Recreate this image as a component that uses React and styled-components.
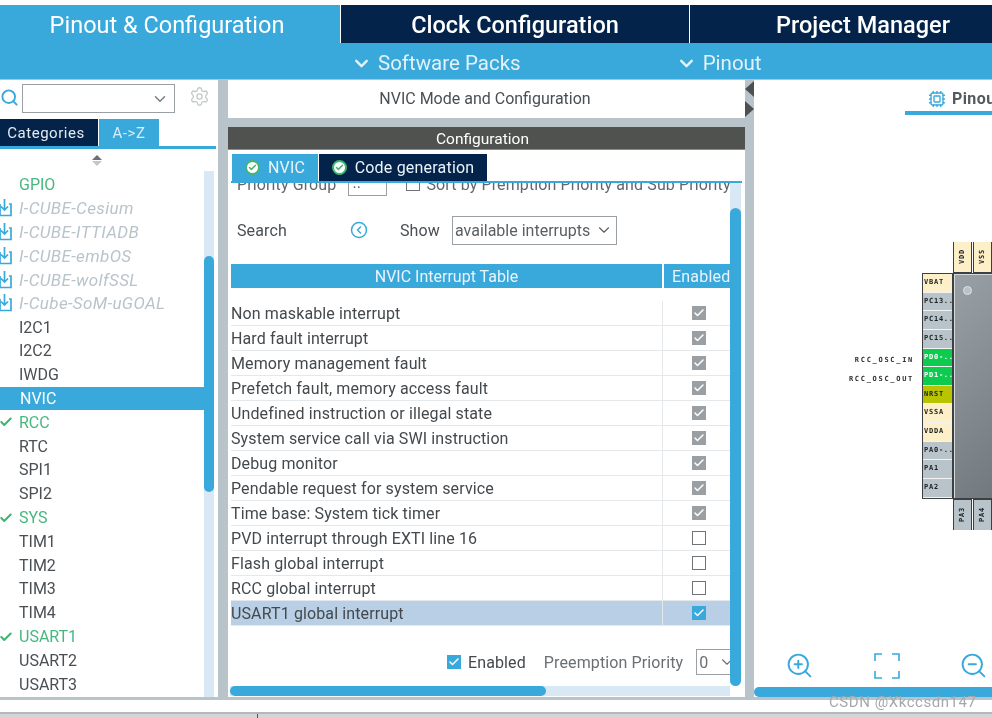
import React from "react";
import styled, { createGlobalStyle } from "styled-components";
import { ChevronDown, Search, Settings, Check, CircleChevronLeft, ZoomIn, ZoomOut, Cpu } from "lucide-react";

const BLUE = "#39a9dc";
const NAVY = "#03234b";
const GRAY = "#b9c4ca";

const Global = createGlobalStyle`
  html, body { margin: 0; padding: 0; background: #fff; }
  * { box-sizing: border-box; }
  body { font-family: Roboto, "Liberation Sans", sans-serif; color: #4a4f54; }
`;

const Page = styled.div`
  width: 992px; height: 718px; overflow: hidden; position: relative;
  display: flex; flex-direction: column; padding-top: 5px; background: #fff; filter: blur(0.3px);
`;
const TopBar = styled.div`
  height: 38px; display: grid; grid-template-columns: 340px 1px 348px 1px 1fr; background: ${BLUE};
`;
const TopTab = styled.div`
  display: flex; align-items: center; justify-content: center; font-size: 23.5px;
  padding-top: 2px; color: #fff;
  padding-left: ${p => p.$pl || 0}px;
  padding-right: ${p => p.$pr || 0}px;
  font-weight: ${p => (p.$active ? 400 : 500)};
  background: ${p => (p.$active ? BLUE : NAVY)};
`;
const TabSep = styled.div` background: #fff; `;
const SubBar = styled.div`
  height: 37px; background: ${BLUE}; display: flex; color: #e3f1f9; font-size: 20.5px; align-items: center;
  padding: 4px 0 0 351px; gap: 155px; border-bottom: 1px solid #8ed0ee;
`;
const SubItem = styled.div`
  display: flex; align-items: center; gap: 6px; svg { display: block; }
`;
const Main = styled.div`
  flex: none; height: 620px; display: flex; background: ${GRAY}; padding-bottom: 3px;
`;

/* left */
const LeftPanel = styled.div`
  width: 218px; background: #fff; display: flex; flex-direction: column; flex: none;
`;
const SearchRow = styled.div`
  height: 39px; display: flex; align-items: flex-start; padding: 4px 0 0 0; color: ${BLUE};
`;
const SearchBox = styled.div`
  width: 153px; height: 29px; margin-left: 3px; border: 1.5px solid #9aa0a4;
  display: flex; align-items: center; justify-content: flex-end; padding-right: 5px; color: #7a7f83;
`;
const Gear = styled.div` margin: 2px 0 0 14px; color: #c4c8ca; `;
const SideTabs = styled.div`
  height: 30px; display: flex; border-bottom: 3px solid ${BLUE}; margin-right: 2px;
`;
const SideTab = styled.div`
  height: 27px; display: flex; align-items: center; justify-content: center; font-size: 15px; letter-spacing: .55px;
  width: ${p => p.$w}px; margin-right: 1px; color: ${p => (p.$active ? "#d8eef9" : "#e6ebef")};
  padding-right: ${p => (p.$active ? 0 : 6)}px;
  background: ${p => (p.$active ? BLUE : NAVY)};
`;
const SortMark = styled.div`
  height: 22px; display: flex; flex-direction: column; align-items: center; justify-content: center;
  gap: 1px; padding-right: 24px; flex: none;
`;
const Tri = styled.div`
  width: 0; height: 0; border-left: 5px solid transparent; border-right: 5px solid transparent;
  ${p => (p.$up ? "border-bottom: 5px solid #6c7074;" : "border-top: 5px solid #c3c7ca;")}
`;
const ListWrap = styled.div`
  flex: 1; min-height: 0; display: flex; overflow: hidden;
`;
const List = styled.div`
  width: 204px; flex: none; padding-top: 1.5px; overflow: hidden;
`;
const Item = styled.div`
  height: 23.8px; display: flex; align-items: center; font-size: ${p => (p.$cube ? 17 : 16)}px; position: relative; padding-left: 19px;
  color: ${p => (p.$sel ? "#fff" : p.$green ? "#46b87e" : p.$cube ? "#b9c4ca" : "#4a4f54")};
  font-style: ${p => (p.$cube ? "italic" : "normal")};
  letter-spacing: ${p => (p.$cube ? ".35px" : "0")};
  background: ${p => (p.$sel ? BLUE : "transparent")};
  ${p => (p.$sel ? "width: 218px; padding-left: 20px; z-index: 1;" : "")}
`;
const ItemIcon = styled.span`
  position: absolute; left: -1px; top: ${p => p.$t}px; display: flex; color: ${p => p.$c};
`;
const VTrack = styled.div`
  width: ${p => p.$w}px; flex: none; background: #d9e8f5; padding-top: ${p => p.$top}px;
`;
const VThumb = styled.div`
  height: ${p => p.$h}px; background: ${BLUE}; border-radius: 6px;
`;

/* center */
const Center = styled.div`
  width: 517px; margin: 0 9px 0 10px; flex: none; display: flex; flex-direction: column;
`;
const ModeHead = styled.div`
  height: 38px; flex: none; background: #fff; display: flex; align-items: center; justify-content: center;
  font-size: 16px; margin-bottom: 9px; padding: 0 3px 2px 0;
`;
const ConfigBody = styled.div`
  flex: 1; min-height: 0; background: #fff; display: flex; flex-direction: column;
`;
const ConfigTitle = styled.div`
  height: 23px; flex: none; background: #505250; color: #fff; font-size: 15.5px; padding: 2px 8px 0 0;
  display: flex; align-items: center; justify-content: center; border-bottom: 1px solid #8b8d8d;
`;
const CTabs = styled.div`
  height: 31px; flex: none; padding: 4px 0 0 4px; display: flex; gap: 1px; background: #fff;
`;
const CTab = styled.div`
  height: 27px; display: flex; align-items: center; gap: 8px; justify-content: center;
  width: ${p => p.$w}px; font-size: 16px; letter-spacing: .2px; color: #eaf4fa;
  background: ${p => (p.$active ? BLUE : NAVY)};
`;
const Badge = styled.span`
  width: 15px; height: 15px; border-radius: 50%; background: #fff; border: 2.5px solid #41b673; flex: none;
  display: flex; align-items: center; justify-content: center; color: #41b673;
`;
const CLine = styled.div` height: 2px; flex: none; background: ${BLUE}; margin: 0 3px 0 3px; `;
const Scroller = styled.div`
  flex: 1; min-height: 0; display: flex; padding-left: 3px; padding-right: 4px;
`;
const Content = styled.div`
  width: 499px; flex: none; display: flex; flex-direction: column; overflow: hidden; letter-spacing: .12px;
`;
const ClipRow = styled.div`
  height: 19px; flex: none; overflow: hidden; display: flex; align-items: flex-end; font-size: 16px; padding-left: 6px;
  white-space: nowrap; color: #62676b;
`;
const ClipInner = styled.div`
  display: flex; align-items: center; margin-bottom: -1px; height: 22px; transform: translateY(-8px);
`;
const MiniSel = styled.span`
  display: inline-flex; flex: none; width: 39px; height: 24px; border: 1px solid #9aa0a4; margin: 0 19px 0 12px; padding-left: 3px;
`;
const MiniCheck = styled.span`
  display: inline-block; flex: none; width: 14px; height: 14px; border: 1px solid #6f7478; margin-right: 6px;
`;
const SearchLine = styled.div`
  height: 38px; flex: none; margin-top: 9px; display: flex; align-items: center; font-size: 16px; padding-left: 6px;
`;
const SearchLabel = styled.span` width: 113px; `;
const CircleIcon = styled.span` width: 50px; display: flex; color: ${BLUE}; `;
const ShowSel = styled.div`
  width: 165px; height: 29px; margin-left: 12px; border: 1.5px solid #9aa0a4; display: flex; align-items: center; flex: none;
  justify-content: space-between; padding: 0 3px 0 2px; color: #5a5f63; font-size: 16px; white-space: nowrap; letter-spacing: 0;
`;
const TableHead = styled.div`
  flex: none; height: 24px; margin-top: 15px; display: grid; grid-template-columns: 431px 2px 1fr; font-size: 16px; color: #eaf4fa; letter-spacing: 0;
`;
const HeadCell = styled.div`
  background: ${BLUE}; display: flex; align-items: center; justify-content: center;
  ${p => (p.$e ? "justify-content: flex-start; padding-left: 8px; letter-spacing: .2px;" : "")}
`;
const Rows = styled.div` margin-top: 13px; flex: none; `;
const Row = styled.div`
  height: 25px; display: grid; grid-template-columns: 432px 1fr; align-items: stretch;
  border-bottom: 1px solid #e4e8eb; background: ${p => (p.$sel ? "#b8cfe5" : "transparent")};
  font-size: 16px; color: #44494d;
`;
const RowName = styled.div`
  display: flex; align-items: center; white-space: nowrap; padding: 1px 0 0 0; border-right: 1px solid #e4e8eb;
`;
const RowCheck = styled.div` display: flex; align-items: center; justify-content: center; padding-left: 5px; `;
const Box = styled.span`
  width: 14px; height: 14px; display: flex; flex: none; align-items: center; justify-content: center; color: #fff;
  background: ${p => (p.$on ? p.$on : "#fff")};
  border: ${p => (p.$on ? "none" : "1.5px solid #6f7478")};
`;
const Foot = styled.div`
  margin-top: 23px; display: flex; align-items: center; height: 26px; padding-left: 216px; font-size: 16px; flex: none;
  white-space: nowrap;
`;
const FootLabel = styled.span` margin-left: 7px; color: #44494d; `;
const FootPrio = styled.span` margin-left: 18px; color: #6a6f73; `;
const FootSel = styled.div`
  margin-left: 13px; flex: none; width: 50px; height: 26px; border: 1.5px solid #9aa0a4; display: flex; align-items: center;
  justify-content: space-between; padding: 0 9px 0 2px; color: #6a6f73;
`;
const HTrack = styled.div`
  height: 10px; flex: none; margin: 3px 0 1px 2px; width: 500px; background: #d9e8f5;
`;
const HThumb = styled.div`
  width: ${p => p.$w}px; height: 10px; background: ${BLUE}; border-radius: 5px;
`;

/* splitter arrows */
const Arrows = styled.div`
  position: absolute; left: 745px; top: 81px; display: flex; flex-direction: column; gap: 4px;
`;
const ArrowL = styled.div`
  width: 0; height: 0; border-top: 8px solid transparent; border-bottom: 8px solid transparent;
  ${p => (p.$r ? "border-left: 9px solid #4d5052;" : "border-right: 9px solid #4d5052;")}
`;

/* right */
const RightPanel = styled.div`
  flex: 1; min-width: 0; background: #fff; display: flex; flex-direction: column; overflow: hidden; position: relative;
`;
const PinTabs = styled.div`
  height: 35px; flex: none; padding-left: 151px; display: flex; flex-direction: column;
`;
const PinTab = styled.div`
  height: 35px; border-bottom: 4px solid ${BLUE}; display: flex; align-items: center; gap: 6px; padding: 6px 0 0 23px;
  font-weight: 700; font-size: 16px; white-space: nowrap; overflow: hidden; letter-spacing: .4px; color: ${BLUE};
  svg { flex: none; }
`;
const PinTabText = styled.span` color: #55595c; `;
const Canvas = styled.div` flex: 1; min-height: 0; position: relative; `;
const Labels = styled.div`
  position: absolute; right: 78px; top: 240px;
  display: flex; flex-direction: column; align-items: flex-end; gap: 9px;
`;
const Label = styled.div`
  font: 700 7px/10px "DejaVu Sans Mono", monospace; letter-spacing: 1.7px; color: #2c2f31;
`;
const LeftPins = styled.div`
  position: absolute; left: 168px; top: 158px; width: 31px; border: 1px solid #3d4042; display: flex; flex-direction: column;
`;
const Pin = styled.div`
  height: 18.65px; background: ${p => p.$bg}; color: ${p => p.$fg || "#1c1f21"};
  font: 700 7px/17px "DejaVu Sans Mono", monospace; border-bottom: 1px solid #f2f2f2; padding-left: 1px; overflow: hidden; white-space: nowrap; letter-spacing: .75px;
`;
const VPins = styled.div`
  position: absolute; left: 199px; top: ${p => p.$top}px; display: flex; gap: 1px;
`;
const VPin = styled.div`
  width: 19px; height: 31px; background: ${p => p.$bg}; border: 1px solid #3d4042;
  ${p => (p.$bottom ? "border-top: none;" : "border-bottom: none;")}
  font: 700 7px/17px "DejaVu Sans Mono", monospace; letter-spacing: .75px; color: #1c1f21; writing-mode: vertical-rl; transform: rotate(180deg);
  display: flex; align-items: center; justify-content: center;
`;
const ChipBody = styled.div`
  position: absolute; left: 199px; top: 158px; width: 60px; height: 226px;
  background: linear-gradient(135deg, #9aa1a6, #6f767b); border: 1px solid #3d4042; border-right: none; box-shadow: inset 1px 1px 0 #d5dadd;
`;
const Dot = styled.div`
  position: absolute; left: 9px; top: 12px; width: 9px; height: 9px; border-radius: 50%; background: #b9c2c7; border: 1px solid #dde2e5;
`;
const ZoomBar = styled.div`
  height: 31px; flex: none; display: flex; padding-left: 31px; gap: 58px; align-items: flex-start; transform: translateY(4px);
`;
const ZoomIcon = styled.span` display: flex; width: 29px; height: 29px; align-items: center; justify-content: center; color: ${BLUE}; `;
const RHTrack = styled.div` height: 10px; flex: none; margin-top: 9px; background: ${BLUE}; border-radius: 5px 0 0 5px; `;

/* bottom */
const BottomWhite = styled.div` height: 12px; flex: none; background: #fff; `;
const BottomGray = styled.div` flex: 1; background: #d3d5d6; border-top: 2px solid #b5b8ba; position: relative; `;
const Tick = styled.div` position: absolute; left: 257px; top: 0; width: 1px; height: 6px; background: #555; `;
const Watermark = styled.div`
  position: absolute; left: 829px; top: 693px; font-size: 15px; line-height: 18px; letter-spacing: .55px; color: #a5a8aa;
  white-space: nowrap;
`;

const Tray = () => (
  <svg width="13" height="19" viewBox="0 0 13 19" fill="none" stroke="#39a9dc" strokeWidth="1.7">
    <path d="M1 6v11.5h11V6h-2M5.5 1v11M2 8.5l3.5 3.5L9 8.5" />
  </svg>
);
const Fit = () => (
  <svg width="26" height="26" viewBox="0 0 26 26" fill="none" stroke="#39a9dc" strokeWidth="1.6">
    <path d="M1 8V1h7M18 1h7v7M25 18v7h-7M8 25H1v-7" />
  </svg>
);
const BadgeIcon = () => (
  <Badge><Check size={9} strokeWidth={4} /></Badge>
);

const items = [
  ["GPIO", "g"], ["I-CUBE-Cesium", "c"], ["I-CUBE-ITTIADB", "c"], ["I-CUBE-embOS", "c"], ["I-CUBE-wolfSSL", "c"],
  ["I-Cube-SoM-uGOAL", "c"], ["I2C1"], ["I2C2"], ["IWDG"], ["NVIC", "s"], ["RCC", "k"], ["RTC"], ["SPI1"], ["SPI2"],
  ["SYS", "k"], ["TIM1"], ["TIM2"], ["TIM3"], ["TIM4"], ["USART1", "k"], ["USART2"], ["USART3"],
];
const rows = [
  ["Non maskable interrupt", 1], ["Hard fault interrupt", 1], ["Memory management fault", 1],
  ["Prefetch fault, memory access fault", 1], ["Undefined instruction or illegal state", 1],
  ["System service call via SWI instruction", 1], ["Debug monitor", 1], ["Pendable request for system service", 1],
  ["Time base: System tick timer", 1], ["PVD interrupt through EXTI line 16", 0], ["Flash global interrupt", 0],
  ["RCC global interrupt", 0], ["USART1 global interrupt", 2],
];
const PY = "#fdf0c8", PG = "#b9c4ca", PN = "#0ccb4f";
const pins = [
  ["VBAT", PY], ["PC13..", PG], ["PC14..", PG], ["PC15..", PG], ["PD0-..", PN, "#fff"], ["PD1-..", PN, "#fff"],
  ["NRST", "#b9c400"], ["VSSA", PY], ["VDDA", PY], ["PA0-..", PG], ["PA1", PG], ["PA2", PG],
];

export default function App() {
  return (
    <Page>
      <Global />
      <TopBar>
        <TopTab $active $pr={6}>Pinout &amp; Configuration</TopTab>
        <TabSep />
        <TopTab>Clock Configuration</TopTab>
        <TabSep />
        <TopTab $pl={44}>Project Manager</TopTab>
      </TopBar>
      <SubBar>
        <SubItem><ChevronDown size={21} strokeWidth={2.8} />Software Packs</SubItem>
        <SubItem><ChevronDown size={21} strokeWidth={2.8} />Pinout</SubItem>
      </SubBar>
      <Main>
        <LeftPanel>
          <SearchRow>
            <Search size={19} strokeWidth={2.4} style={{ marginTop: 4 }} />
            <SearchBox><ChevronDown size={18} /></SearchBox>
            <Gear><Settings size={21} strokeWidth={1.5} /></Gear>
          </SearchRow>
          <SideTabs>
            <SideTab $w={98}>Categories</SideTab>
            <SideTab $w={60} $active>A-&gt;Z</SideTab>
          </SideTabs>
          <SortMark><Tri $up /><Tri /></SortMark>
          <ListWrap>
            <List>
              {items.map(([name, t]) => (
                <Item key={name} $green={t === "g" || t === "k"} $cube={t === "c"} $sel={t === "s"}>
                  {t === "c" && <ItemIcon $c={BLUE} $t={2}><Tray /></ItemIcon>}
                  {t === "k" && <ItemIcon $c="#3fb56f" $t={5}><Check size={14} strokeWidth={3.5} /></ItemIcon>}
                  {name}
                </Item>
              ))}
            </List>
            <VTrack $w={10} $top={85}><VThumb $h={236} /></VTrack>
          </ListWrap>
        </LeftPanel>
        <Center>
          <ModeHead>NVIC Mode and Configuration</ModeHead>
          <ConfigBody>
            <ConfigTitle>Configuration</ConfigTitle>
            <CTabs>
              <CTab $w={86} $active><BadgeIcon />NVIC</CTab>
              <CTab $w={168}><BadgeIcon />Code generation</CTab>
            </CTabs>
            <CLine />
            <Scroller>
              <Content>
                <ClipRow>
                  <ClipInner>
                    Priority Group<MiniSel>..</MiniSel><MiniCheck />Sort by Premption Priority and Sub Priority
                  </ClipInner>
                </ClipRow>
                <SearchLine>
                  <SearchLabel>Search</SearchLabel>
                  <CircleIcon><CircleChevronLeft size={18} strokeWidth={2} /></CircleIcon>
                  Show
                  <ShowSel>available interrupts<ChevronDown size={18} strokeWidth={1.5} /></ShowSel>
                </SearchLine>
                <TableHead>
                  <HeadCell>NVIC Interrupt Table</HeadCell>
                  <span />
                  <HeadCell $e>Enabled</HeadCell>
                </TableHead>
                <Rows>
                  {rows.map(([name, v]) => (
                    <Row key={name} $sel={v === 2}>
                      <RowName>{name}</RowName>
                      <RowCheck>
                        <Box $on={v === 1 ? "#9a9fa3" : v === 2 ? BLUE : undefined}>
                          {v > 0 && <Check size={12} strokeWidth={3} />}
                        </Box>
                      </RowCheck>
                    </Row>
                  ))}
                </Rows>
                <Foot>
                  <Box $on={BLUE}><Check size={12} strokeWidth={3} /></Box>
                  <FootLabel>Enabled</FootLabel>
                  <FootPrio>Preemption Priority</FootPrio>
                  <FootSel>0<ChevronDown size={18} strokeWidth={1.5} /></FootSel>
                </Foot>
              </Content>
              <VTrack $w={11} $top={25}><VThumb $h={478} /></VTrack>
            </Scroller>
            <HTrack><HThumb $w={316} /></HTrack>
          </ConfigBody>
        </Center>
        <RightPanel>
          <PinTabs>
            <PinTab><Cpu size={18} strokeWidth={1.8} /><PinTabText>Pinout view</PinTabText></PinTab>
          </PinTabs>
          <Canvas>
            <Labels>
              <Label>RCC_OSC_IN</Label>
              <Label>RCC_OSC_OUT</Label>
            </Labels>
            <VPins $top={127}>
              <VPin $bg={PY}>VDD</VPin>
              <VPin $bg={PY}>VSS</VPin>
            </VPins>
            <LeftPins>
              {pins.map(([n, bg, fg]) => <Pin key={n} $bg={bg} $fg={fg}>{n}</Pin>)}
            </LeftPins>
            <ChipBody><Dot /></ChipBody>
            <VPins $top={384}>
              <VPin $bg={PG} $bottom>PA3</VPin>
              <VPin $bg={PG} $bottom>PA4</VPin>
            </VPins>
          </Canvas>
          <ZoomBar>
            <ZoomIcon><ZoomIn size={29} strokeWidth={1.6} /></ZoomIcon>
            <ZoomIcon><Fit /></ZoomIcon>
            <ZoomIcon><ZoomOut size={29} strokeWidth={1.6} /></ZoomIcon>
          </ZoomBar>
          <RHTrack />
        </RightPanel>
      </Main>
      <BottomWhite />
      <BottomGray><Tick /></BottomGray>
      <Arrows><ArrowL /><ArrowL $r /></Arrows>
      <Watermark>CSDN @Xkccsdn147</Watermark>
    </Page>
  );
}
